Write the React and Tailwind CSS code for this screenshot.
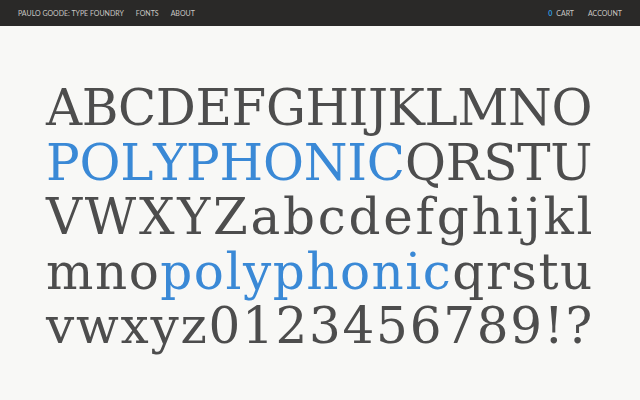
import React from 'react';

const lines = [
  [{ t: 'ABCDEFGHIJKLMNO' }],
  [{ t: 'POLYPHONIC', blue: true }, { t: 'QRSTU' }],
  [{ t: 'VWXYZabcdefghijkl' }],
  [{ t: 'mno' }, { t: 'polyphonic', blue: true }, { t: 'qrstu' }],
  [{ t: 'vwxyz0123456789!?' }],
];

function SpecimenLine({ parts }) {
  // spread every glyph so the line fills the full measure
  const chars = parts.flatMap((p) => p.t.split('').map((c) => ({ c, blue: p.blue })));
  return (
    <div className="flex justify-between w-[545px] ml-[46px] h-[54.5px] leading-[54.5px]">
      {chars.map((ch, i) => (
        <span
          key={i}
          className={(ch.blue ? 'text-[#3a89d6]' : 'text-[#4d4d4d]') + ' tracking-[-0.03em]'}
        >
          {ch.c}
        </span>
      ))}
    </div>
  );
}

export default function App() {
  return (
    <div className="w-[640px] h-[400px] overflow-hidden bg-[#f8f8f6]">
      <nav className="h-[26px] bg-[#2a2928] flex items-center justify-between px-[18px] text-[7px] uppercase text-[#c9c7c4] font-['Lato',sans-serif]">
        <div className="flex items-center gap-[12px]">
          <span>Paulo Goode: Type Foundry</span>
          <span>Fonts</span>
          <span>About</span>
        </div>
        <div className="flex items-center gap-[14px]">
          <span>
            <span className="text-[#2f9be0] font-bold mr-[4px]">0</span>Cart
          </span>
          <span>Account</span>
        </div>
      </nav>
      <main className="pt-[55px] text-[50px] font-['DejaVu_Serif',serif]">
        {lines.map((parts, i) => (
          <SpecimenLine key={i} parts={parts} />
        ))}
      </main>
    </div>
  );
}
